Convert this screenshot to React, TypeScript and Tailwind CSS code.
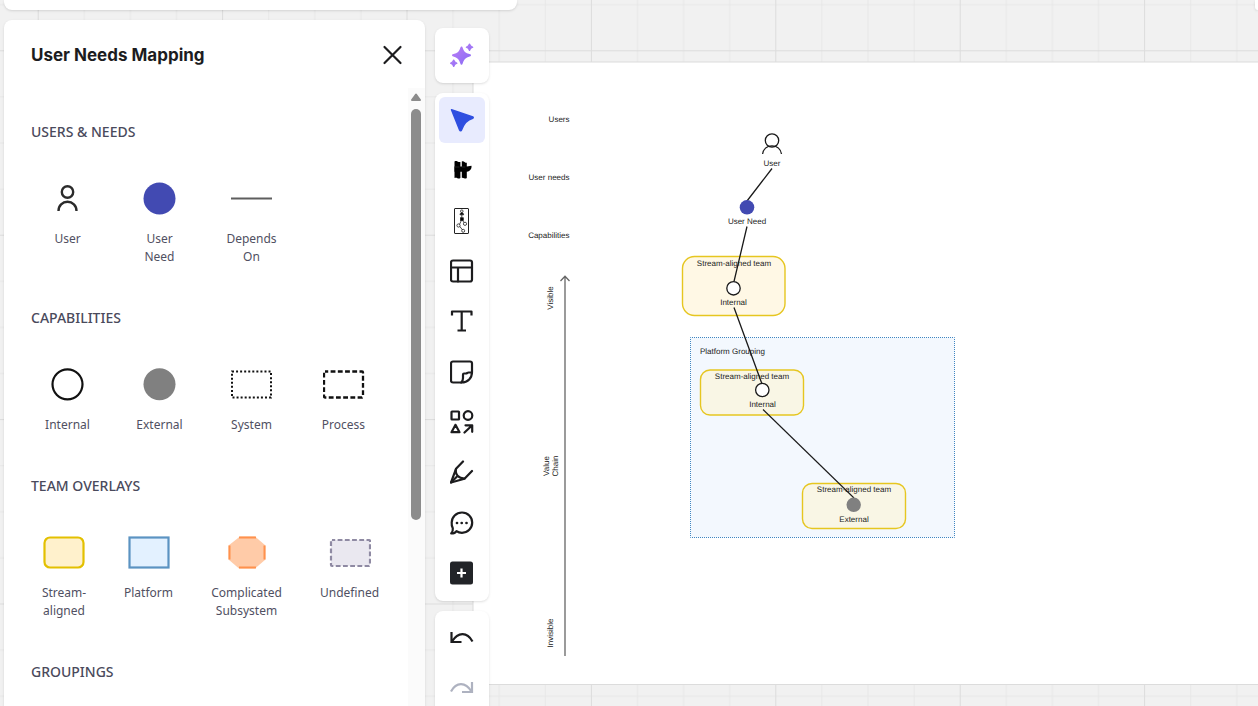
import React from 'react';

type ShapeItem = { name: string; icon: React.ReactNode };

const Icon: React.FC<{ children: React.ReactNode }> = ({ children }) => (
  <svg
    className="w-6 h-6"
    viewBox="0 0 24 24"
    fill="none"
    stroke="currentColor"
    strokeWidth={2.2}
    strokeLinecap="round"
    strokeLinejoin="round"
    aria-hidden="true"
  >
    {children}
  </svg>
);

const ShapeIcon: React.FC<{ children: React.ReactNode }> = ({ children }) => (
  <svg className="w-[42px] h-[42px]" viewBox="0 0 42 42" fill="none" aria-hidden="true">
    {children}
  </svg>
);

const usersAndNeeds: ShapeItem[] = [
  {
    name: 'User',
    icon: (
      <ShapeIcon>
        <circle cx="20.5" cy="15" r="5.7" stroke="#2b2b2b" strokeWidth="2.4" />
        <path d="M11.500 34c0-5.5 4-9.200 9-9.200s9 3.700 9 9.200" stroke="#2b2b2b" strokeWidth="2.4" />
      </ShapeIcon>
    ),
  },
  {
    name: 'User Need',
    icon: (
      <ShapeIcon>
        <circle cx="20.5" cy="21.500" r="16" fill="#424ab2" />
      </ShapeIcon>
    ),
  },
  {
    name: 'Depends On',
    icon: (
      <ShapeIcon>
        <path d="M0 21.500h41" stroke="#5e5e5e" strokeWidth="2.200" />
      </ShapeIcon>
    ),
  },
];

const capabilities: ShapeItem[] = [
  {
    name: 'Internal',
    icon: (
      <ShapeIcon>
        <circle cx="20.500" cy="21.300" r="15" stroke="#111" strokeWidth="2.200" />
      </ShapeIcon>
    ),
  },
  {
    name: 'External',
    icon: (
      <ShapeIcon>
        <circle cx="20.500" cy="21.300" r="16" fill="#808080" />
      </ShapeIcon>
    ),
  },
  {
    name: 'System',
    icon: (
      <ShapeIcon>
        <rect x="1" y="8.500" width="39" height="26" stroke="#111" strokeWidth="2" strokeDasharray="2 2.06" />
      </ShapeIcon>
    ),
  },
  {
    name: 'Process',
    icon: (
      <ShapeIcon>
        <rect
          x="1"
          y="8.500"
          width="39"
          height="26"
          rx="1"
          stroke="#111"
          strokeWidth="2.300"
          strokeDasharray="4.820 2.400"
          strokeDashoffset="1.600"
        />
      </ShapeIcon>
    ),
  },
];

const teamOverlays: ShapeItem[] = [
  {
    name: 'Stream- aligned',
    icon: (
      <ShapeIcon>
        <rect x="1.500" y="6.500" width="39" height="30" rx="5.500" fill="#fff1cc" stroke="#e3c000" strokeWidth="2.200" />
      </ShapeIcon>
    ),
  },
  {
    name: 'Platform',
    icon: (
      <ShapeIcon>
        <rect x="1.500" y="6.500" width="39" height="30" fill="#e3f1ff" stroke="#5b93c2" strokeWidth="2.200" />
      </ShapeIcon>
    ),
  },
  {
    name: 'Complicated Subsystem',
    icon: (
      <ShapeIcon>
        <path d="M14 5.500h15l10.500 9v14L29 37.500H13L2.500 28.500v-14z" fill="#ffcba8" />
        <path d="M13 6.500h17M13 36.500h17M3.500 14.500v14M38.500 14.500v14" stroke="#ff914d" strokeWidth="2" />
      </ShapeIcon>
    ),
  },
  {
    name: 'Undefined',
    icon: (
      <ShapeIcon>
        <rect
          x="2"
          y="9"
          width="39"
          height="26"
          rx="1"
          fill="#eae8f0"
          stroke="#8f8aa3"
          strokeWidth="2.200"
          strokeDasharray="4.820 2.400"
          strokeDashoffset="1.600"
        />
      </ShapeIcon>
    ),
  },
];

const tools: ShapeItem[] = [
  {
    name: 'Select',
    icon: (
      <Icon>
        <path
          d="M1.500 1.700 22.800 9c.6.2.6 1 0 1.200-5.600 1.400-9 5-11.300 11.900-.3.900-1.500.900-1.800 0z"
          fill="#2f4fe0"
          stroke="#2f4fe0"
          strokeWidth="1.500"
        />
      </Icon>
    ),
  },
  {
    name: 'Team Topologies',
    icon: (
      <Icon>
        <path d="M4.500 3.500c1-.7 2-.5 3 0s2 .7 2.900.5v16c-1 .7-2.100.7-3 .2s-1.900-.5-2.900-.2z" fill="#000" stroke="none" />
        <path d="M11.800 3.500c1-.5 2-.2 2.700.4s1.500.9 2.300.9v15.200c-1 .7-1.900.6-2.700.2s-1.500-.7-2.300-.5z" fill="#000" stroke="none" />
        <path d="M4.500 8.500h12.300l4.700-.8c.3 2.800-1 5.300-4.700 6H4.500z" fill="#000" stroke="none" />
        <path d="M5 9h4M12 9h3" stroke="#555" strokeWidth="0.400" />
      </Icon>
    ),
  },
  {
    name: 'Value chain',
    icon: (
      <svg className="w-4 h-7" viewBox="0 0 16 28" fill="none" stroke="#222" strokeWidth="0.800" aria-hidden="true">
        <rect x="0.500" y="1.500" width="14" height="25" rx="0.500" strokeWidth="1" />
        <circle cx="7.800" cy="4.200" r="1.300" />
        <path d="M6 7.800c0-2.800 3.600-2.800 3.600 0z" fill="#000" />
        <path d="M7.800 8v3.500M7.800 12.500 5 18.500l4 5M7.800 12.500l3 4" />
        <rect x="6.500" y="10.800" width="2.800" height="2.600" fill="#000" />
        <circle cx="4.500" cy="18.500" r="1.600" fill="#fff" />
        <circle cx="11" cy="16.800" r="1.600" fill="#fff" />
        <circle cx="9.200" cy="23.800" r="1.500" fill="#fff" />
      </svg>
    ),
  },
  {
    name: 'Templates',
    icon: (
      <Icon>
        <rect x="1" y="1.500" width="21" height="21" rx="2" />
        <path d="M1 8.500h21M8 8.500v14" />
      </Icon>
    ),
  },
  {
    name: 'Text',
    icon: (
      <Icon>
        <path d="M2 6.500v-4h19.500v4M11.700 2.500v19M7.500 21.500h8.500" strokeLinecap="butt" strokeLinejoin="round" />
      </Icon>
    ),
  },
  {
    name: 'Sticky note',
    icon: (
      <Icon>
        <path d="M3 1.500h17a2 2 0 0 1 2 2V12c0 6-4 10.500-10.500 10.500H3a2 2 0 0 1-2-2v-17a2 2 0 0 1 2-2z" />
        <path d="M21.800 12.500h-3.300c-1 0-1.500 1-2.500 1h-2c-.8 0-1 .5-1 1.200v3.300c0 2.300-.5 3.500-1.800 4.500" />
      </Icon>
    ),
  },
  {
    name: 'Shapes and lines',
    icon: (
      <Icon>
        <rect x="1.500" y="1.500" width="7.500" height="8" rx="0.500" />
        <circle cx="18" cy="5.500" r="4.300" />
        <path d="M5.500 14.800 1.500 22.200h8zM15.500 15.300h6.700v6.500M22 15.500l-7.500 7" />
      </Icon>
    ),
  },
  {
    name: 'Pen',
    icon: (
      <Icon>
        <path d="M13 1.500 6 8.800 1 22.500l13.500-3.800L22 11" />
        <path d="M6 9c-1.200 5.500 2.500 9.500 8.500 9.500M1 22.500l5.500-5.500" />
      </Icon>
    ),
  },
  {
    name: 'Comment',
    icon: (
      <Icon>
        <path d="M12 1.500c5.800 0 10.200 4.400 10.200 10.100S17.800 21.800 12 21.800c-2.200 0-4-.6-5.500-1.700-1 1.600-2.800 2.400-5.300 2.400 1.300-1.500 1.900-3.200 1.600-5.200A10.200 10.200 0 0 1 1.700 11.600C1.700 5.900 6.200 1.500 12 1.500z" />
        <path d="M7 12h.01M11.700 12h.01M16.500 12h.01" strokeWidth="2.700" />
      </Icon>
    ),
  },
  {
    name: 'More',
    icon: (
      <Icon>
        <rect x="0" y="0.500" width="23" height="23" rx="2.500" fill="#222428" stroke="none" />
        <path d="M11.500 7.500v9M7 12h9" stroke="#fff" strokeLinecap="butt" />
      </Icon>
    ),
  },
];

const sections = [
  { title: 'USERS & NEEDS', items: usersAndNeeds, columns: 'grid-cols-[73px_73px_73px_73px] gap-[19px]' },
  { title: 'CAPABILITIES', items: capabilities, columns: 'grid-cols-[73px_73px_73px_73px] gap-[19px]' },
  { title: 'TEAM OVERLAYS', items: teamOverlays, columns: 'grid-cols-[66px_67px_93px_77px] gap-[18px]' },
  { title: 'GROUPINGS', items: [], columns: 'grid-cols-4' },
];

const Board: React.FC = () => (
  <svg className="absolute inset-0 w-full h-full" aria-label="User needs map">
    <defs>
      <pattern id="grid" x="37.700" y="50.300" width="184.400" height="184.400" patternUnits="userSpaceOnUse">
        <path
          d="M46.600 0v184.400M92.700 0v184.400M138.800 0v184.400M0 46.600h184.400M0 92.700h184.400M0 138.800h184.400"
          stroke="#e7e7e7"
        />
        <path d="M0.500 0v184.400M0 0.500h184.400" stroke="#dcdcdc" />
      </pattern>
    </defs>
    <rect width="100%" height="100%" fill="#f1f1f1" />
    <rect width="100%" height="100%" fill="url(#grid)" />
    <rect x="473" y="62" width="100%" height="622.500" fill="#fff" stroke="#dcdcdc" />

    {/* Team and platform areas */}
    <rect x="682.500" y="256.500" width="102.500" height="59" rx="12" fill="#fff8e5" stroke="#e6c620" strokeWidth="1.400" />
    <rect
      x="690.500"
      y="337.500"
      width="264"
      height="200"
      fill="#f3f8fe"
      stroke="#3f86c2"
      strokeDasharray="1 1"
      strokeDashoffset="0.500"
    />
    <rect x="700.500" y="370" width="103" height="45" rx="9.500" fill="#f9f6e5" stroke="#e6c620" strokeWidth="1.400" />
    <rect x="802.500" y="483.500" width="103" height="45" rx="9.500" fill="#f9f6e5" stroke="#e6c620" strokeWidth="1.400" />

    {/* Value chain axis */}
    <path d="M565 656V276.500M560.500 281l4.500-4.800 4.500 4.800" fill="none" stroke="#666" strokeWidth="1.300" />

    <g fill="#222" fontSize="8" fontFamily='"Liberation Sans", Arial, sans-serif' textRendering="geometricPrecision">
      <g textAnchor="end">
        <text x="569.500" y="122">Users</text>
        <text x="569.500" y="180">User needs</text>
        <text x="569.500" y="238">Capabilities</text>
      </g>
      <g textAnchor="middle">
        <text transform="translate(553 298) rotate(-90)">Visible</text>
        <text transform="translate(549 466) rotate(-90)">Value</text>
        <text transform="translate(558 466) rotate(-90)">Chain</text>
        <text transform="translate(553 633) rotate(-90)">Invisible</text>
        <text x="772" y="166">User</text>
        <text x="747" y="224">User Need</text>
        <text x="734" y="266">Stream-aligned team</text>
        <text x="733.500" y="305">Internal</text>
        <text x="752" y="379">Stream-aligned team</text>
        <text x="762.500" y="407">Internal</text>
        <text x="854" y="492">Stream-aligned team</text>
        <text x="854" y="522">External</text>
      </g>
      <text x="700" y="354">Platform Grouping</text>
    </g>

    <g stroke="#1a1a1a" strokeWidth="1.300" fill="none">
      <path d="M772 168.500 747 201M747 226.500 734 281.500M734 307.500 762 384" />
      <path d="M763 409.500 854 498" strokeWidth="1.100" />
      <circle cx="772" cy="140.500" r="6.700" />
      <path d="M762.600 154c.7-5.200 4.600-8.200 9.400-8.200s8.700 3 9.500 8.200" />
      <circle cx="733.500" cy="288.300" r="6.700" fill="#fff" />
      <circle cx="762.300" cy="390" r="6.700" fill="#fff" />
    </g>
    <circle cx="747" cy="207.300" r="7.300" fill="#424ab2" />
    <circle cx="853.700" cy="504.800" r="7.200" fill="#808080" />
  </svg>
);

const ShapePanel: React.FC = () => (
  <aside className="flex w-[421px] flex-1 min-h-0 flex-col overflow-hidden rounded-t-lg bg-white shadow-sm">
    <header className="flex h-[68px] shrink-0 items-center justify-between pt-px pl-[27px] pr-5">
      <h1 className='font-["Inter",sans-serif] text-[17px] leading-6 font-bold text-[#1c1c1e]'>User Needs Mapping</h1>
      <button type="button" aria-label="Close" className="text-[#1c1c1e]">
        <Icon>
          <path d="M3.500 4l16 16M19.500 4l-16 16" />
        </Icon>
      </button>
    </header>
    <div className="flex min-h-0 flex-1">
      <div className="flex flex-1 flex-col gap-[42px] overflow-hidden pl-[27px] pt-[34px]">
        {sections.map((section) => (
          <section key={section.title} className="shrink-0">
            <h2 className="text-[14px] leading-5 font-medium text-[#4a4a5c]">{section.title}</h2>
            <div className={`mt-[35px] grid ${section.columns}`}>
              {section.items.map((item) => (
                <button
                  key={item.name}
                  type="button"
                  className="flex flex-col items-center gap-[11px] px-2 text-center text-[12px] leading-[18px] text-[#505062]"
                >
                  {item.icon}
                  <span>{item.name}</span>
                </button>
              ))}
            </div>
          </section>
        ))}
      </div>
      {/* Scrollbar */}
      <div className="flex w-[17px] flex-col items-center gap-2 bg-[#fbfbfb] pt-[5px] pr-px">
        <svg className="w-[10px] h-2 shrink-0" viewBox="0 0 10 8" aria-hidden="true">
          <path d="M5 1.500 9 7H1z" fill="#8c8c8c" stroke="#8c8c8c" strokeWidth="2" strokeLinejoin="round" />
        </svg>
        <div className="h-[411px] w-[10px] shrink-0 rounded-full bg-[#8c8c8c]" />
      </div>
    </div>
  </aside>
);

const toolButton = 'flex h-[46px] w-[46px] shrink-0 items-center justify-center rounded-md';

const Toolbar: React.FC = () => (
  <nav className="flex w-[54px] flex-col gap-[10px] pt-2 text-[#1c1c1e]">
    <div className="rounded-lg bg-white px-1 pt-1 pb-[5px] shadow-sm">
      <button type="button" aria-label="AI assistant" className={toolButton}>
        <svg className="w-6 h-6" viewBox="0 0 24 24" aria-hidden="true">
          <defs>
            <linearGradient id="spark" x1="0" y1="0" x2="1" y2="1">
              <stop offset="0" stopColor="#b87cf5" />
              <stop offset="1" stopColor="#8a6cf5" />
            </linearGradient>
          </defs>
          <g fill="url(#spark)" stroke="url(#spark)" strokeLinejoin="round">
            <path d="M11.500 4.500c1.500 5 3 6.300 8.500 7.800-5.500 1.700-7 3.200-8.500 8.500-1.500-5.300-3-6.800-8.500-8.500 5.500-1.500 7-2.800 8.500-7.800z" strokeWidth="2" />
            <path d="M19.500 1c.6 2 1.100 2.500 3.200 3.200-2.100.6-2.600 1.200-3.200 3.300-.6-2.100-1.100-2.700-3.200-3.300C18.400 3.500 18.900 3 19.500 1zM3.700 17c.6 2 1.100 2.500 3.200 3.200-2.100.6-2.600 1.200-3.200 3.300-.6-2.100-1.100-2.700-3.200-3.300C2.600 19.500 3.100 19 3.700 17z" strokeWidth="1.200" />
          </g>
        </svg>
      </button>
    </div>
    <div className="flex h-[508px] shrink-0 flex-col justify-between rounded-lg bg-white px-1 pt-1 pb-[5px] shadow-sm">
      {tools.map((tool, index) => (
        <button
          key={tool.name}
          type="button"
          aria-label={tool.name}
          className={`${toolButton} ${index === 0 ? 'bg-[#e8ebfe]' : ''}`}
        >
          {tool.icon}
        </button>
      ))}
    </div>
    <div className="flex flex-1 flex-col gap-1 rounded-t-lg bg-white px-1 pt-1 shadow-sm">
      <button type="button" aria-label="Undo" className={toolButton}>
        <Icon>
          <path d="M1.500 6v10h10M2 15.500C8 6 17 5.500 22.500 15.500" strokeLinecap="butt" strokeLinejoin="miter" />
        </Icon>
      </button>
      <button type="button" aria-label="Redo" disabled className={`${toolButton} text-[#aeb2c0]`}>
        <Icon>
          <path d="M22 6v10H12M21.500 15.500C15.500 6 6.500 5.500 1 15.500" strokeLinecap="butt" strokeLinejoin="miter" />
        </Icon>
      </button>
    </div>
  </nav>
);

const App: React.FC = () => {
  return (
    <main className='relative h-screen overflow-hidden font-["Noto_Sans",sans-serif]'>
      <Board />
      <div className="relative flex h-full flex-col gap-[10px] pl-1">
        <div className="flex shrink-0 justify-between">
          <div className="h-[10px] w-[513px] rounded-b-lg bg-white shadow-sm" />
          <div className="h-[10px] w-[3px] rounded-bl-lg bg-white shadow-sm" />
        </div>
        <div className="flex min-h-0 flex-1 gap-[10px]">
          <div className="flex flex-col">
            <ShapePanel />
          </div>
          <Toolbar />
        </div>
      </div>
    </main>
  );
};

export default App;
